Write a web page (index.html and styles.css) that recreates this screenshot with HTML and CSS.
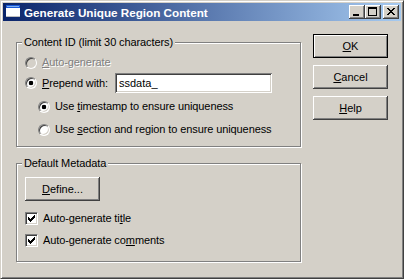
FILE: index.html
```html
<!DOCTYPE html>
<html>
  <head>
    <meta charset="UTF-8" />
    <title>Generate Unique Region Content</title>
    <link rel="stylesheet" href="styles.css">
  </head>

  <body>
    <div class="window">
      <div class="titlebar">
        <svg class="app-icon" width="16" height="16" viewBox="0 0 16 16" shape-rendering="crispEdges">
          <rect x="1" y="1" width="14" height="12" fill="#ffffff" />
          <rect x="1" y="1" width="14" height="3" fill="#1c5ad8" />
          <rect x="2" y="2" width="12" height="1" fill="#7fb0f0" />
          <rect x="1" y="12" width="14" height="1" fill="#c0c0c0" />
        </svg>
        <span class="title">Generate Unique Region Content</span>
        <div class="caption-buttons">
          <span class="cap-btn">
            <svg width="16" height="14" viewBox="0 0 16 14" shape-rendering="crispEdges">
              <rect x="4" y="9" width="6" height="2" fill="#000" />
            </svg>
          </span>
          <span class="cap-btn">
            <svg width="16" height="14" viewBox="0 0 16 14" shape-rendering="crispEdges">
              <path d="M3 2h9v9h-9z M4 4v6h7v-6z" fill="#000" fill-rule="evenodd" />
            </svg>
          </span>
          <span class="cap-btn close">
            <svg width="16" height="14" viewBox="0 0 16 14" shape-rendering="crispEdges">
              <path d="M4 3h2v1h-2z M10 3h2v1h-2z M5 4h2v1h-2z M9 4h2v1h-2z M6 5h4v1h-4z M7 6h2v1h-2z M6 7h4v1h-4z M5 8h2v1h-2z M9 8h2v1h-2z M4 9h2v1h-2z M10 9h2v1h-2z" fill="#000" />
            </svg>
          </span>
        </div>
      </div>

      <div class="main">
        <div class="left">
          <div class="group content-id">
            <div class="legend">Content ID (limit 30 characters)</div>
            <div class="row r1 disabled">
              <span class="radio"></span>
              <span><u>A</u>uto-generate</span>
            </div>
            <div class="row r2">
              <span class="radio on"></span>
              <span class="prepend"><u>P</u>repend with:</span>
              <input class="field" type="text" value="ssdata_" />
            </div>
            <div class="row r3 sub">
              <span class="radio on"></span>
              <span>Use <u>t</u>imestamp to ensure uniqueness</span>
            </div>
            <div class="row r4 sub">
              <span class="radio"></span>
              <span>Use <u>s</u>ection and region to ensure uniqueness</span>
            </div>
          </div>

          <div class="group metadata">
            <div class="legend">Default Metadata</div>
            <button class="btn define"><u>D</u>efine...</button>
            <div class="row c1">
              <span class="check">
                <svg width="11" height="11" viewBox="0 0 11 11" shape-rendering="crispEdges">
                  <path d="M2 4h1v3h-1z M3 5h1v3h-1z M4 6h1v3h-1z M5 5h1v3h-1z M6 4h1v3h-1z M7 3h1v3h-1z M8 2h1v3h-1z" fill="#000" />
                </svg>
              </span>
              <span>Auto-generate ti<u>t</u>le</span>
            </div>
            <div class="row c2">
              <span class="check">
                <svg width="11" height="11" viewBox="0 0 11 11" shape-rendering="crispEdges">
                  <path d="M2 4h1v3h-1z M3 5h1v3h-1z M4 6h1v3h-1z M5 5h1v3h-1z M6 4h1v3h-1z M7 3h1v3h-1z M8 2h1v3h-1z" fill="#000" />
                </svg>
              </span>
              <span>Auto-generate co<u>m</u>ments</span>
            </div>
          </div>
        </div>

        <div class="right">
          <button class="btn default"><u>O</u>K</button>
          <button class="btn"><u>C</u>ancel</button>
          <button class="btn"><u>H</u>elp</button>
        </div>
      </div>
    </div>
  </body>
</html>
```

FILE: styles.css
```css
* {
  margin: 0;
  padding: 0;
  box-sizing: border-box;
}

body {
  --face: #d4d0c8;
  --shadow: #808080;
  --dark: #404040;
  background: var(--face);
  font-family: "Liberation Sans", Arial, sans-serif;
  font-size: 11px;
  letter-spacing: -0.1px;
  color: #000;
}

.window {
  width: 404px;
  height: 279px;
  border: 1px solid;
  border-color: var(--face) var(--dark) var(--dark) var(--face);
  box-shadow: inset 1px 1px #fff, inset -1px -1px var(--shadow);
  padding: 2px;
  background: var(--face);
}

/* title bar */
.titlebar {
  height: 18px;
  display: flex;
  align-items: center;
  padding: 0 2px;
  background: linear-gradient(to right, #0a246a, #a6caf0);
  color: #fff;
}
.app-icon {
  flex: none;
  display: block;
}
.title {
  flex: 1;
  margin-left: 3px;
  font-weight: bold;
  font-size: 11.7px;
  letter-spacing: 0;
  white-space: nowrap;
}
.caption-buttons {
  display: flex;
}
.cap-btn {
  width: 16px;
  height: 14px;
  display: flex;
  background: var(--face);
  box-shadow: inset -1px -1px var(--dark), inset 1px 1px #fff,
    inset -2px -2px var(--shadow);
}
.cap-btn.close {
  margin-left: 2px;
}
.cap-btn svg {
  display: block;
}

/* body */
.main {
  display: flex;
  align-items: flex-start;
  padding: 13px 0 0 13px;
}
.left {
  width: 285px;
  margin-top: 8px;
}
.right {
  display: flex;
  flex-direction: column;
  margin-left: 12px;
}

.group {
  border: 1px solid var(--shadow);
  box-shadow: 1px 1px 0 #fff, inset 1px 1px 0 #fff;
  padding-left: 8px;
}
.content-id {
  height: 105px;
}
.metadata {
  height: 99px;
  margin-top: 16px;
}
.legend {
  width: fit-content;
  margin: -7px 0 0 -3px;
  padding: 0 2px;
  background: var(--face);
  line-height: 13px;
  white-space: nowrap;
}

.row {
  display: flex;
  align-items: center;
  height: 13px;
  line-height: 13px;
  white-space: nowrap;
}
.r1 { margin-top: 7px; }
.r2 { margin-top: 4px; height: 20px; }
.r3 { margin-top: 7px; }
.r4 { margin-top: 10px; }
.c1 { margin-top: 11px; }
.c2 { margin-top: 9px; }
.sub {
  padding-left: 13px;
}

.disabled {
  color: var(--shadow);
  text-shadow: 1px 1px #fff;
}

.radio {
  flex: none;
  width: 12px;
  height: 12px;
  margin-right: 5px;
  border-radius: 50%;
  background: #fff;
  border: 1px solid;
  border-color: var(--shadow) #fff #fff var(--shadow);
  box-shadow: inset 1px 1px var(--dark), inset -1px -1px var(--face);
}
.radio.on {
  background: radial-gradient(circle, #000 2px, #fff 2.6px);
}
.disabled .radio {
  background: var(--face);
}

.check {
  flex: none;
  display: flex;
  width: 13px;
  height: 13px;
  margin-right: 5px;
  background: #fff;
  border: 1px solid;
  border-color: var(--shadow) #fff #fff var(--shadow);
  box-shadow: inset 1px 1px var(--dark), inset -1px -1px var(--face);
}
.check svg {
  display: block;
}

.prepend {
  width: 73px;
}
.field {
  width: 157px;
  height: 20px;
  border: none;
  outline: none;
  padding: 0 4px;
  font: inherit;
  color: #000;
  background: #fff;
  box-shadow: inset 1px 1px var(--shadow), inset -1px -1px #fff,
    inset 2px 2px var(--dark), inset -2px -2px var(--face);
}

.btn {
  width: 75px;
  height: 24px;
  border: none;
  padding: 0;
  font: inherit;
  color: #000;
  background: var(--face);
  box-shadow: inset -1px -1px var(--dark), inset 1px 1px #fff,
    inset -2px -2px var(--shadow);
}
.right .btn + .btn {
  margin-top: 7px;
}
.btn.default {
  box-shadow: inset 0 0 0 1px #000, inset 2px 2px #fff,
    inset -2px -2px var(--shadow);
}
.define {
  display: block;
  margin-top: 7px;
}
```
